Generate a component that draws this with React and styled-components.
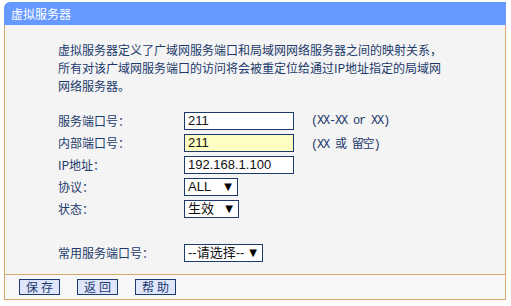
import React from "react";
import styled, { createGlobalStyle } from "styled-components";

const Global = createGlobalStyle`
  html, body { margin: 0; padding: 0; background: #ffffff; }
  body { font-family: "Noto Sans CJK SC", "Liberation Sans", sans-serif; }
`;

const NAVY = "#1c3a6c";
const TAN = "#d7a86c";
const CJK = `"Noto Sans CJK SC", sans-serif`;

const Page = styled.div`
  padding: 2px 0 0 4px;
  width: 502px;
`;

const Header = styled.div`
  height: 23px;
  background: #6699ff;
  border-top-left-radius: 6px;
  color: #ffffff;
  font-family: ${CJK};
  font-size: 12px;
  line-height: 23px;
  padding-left: 7px;
`;

const Body = styled.div`
  background: #f4f4f4;
  border-left: 1px solid ${TAN};
  border-right: 1px solid ${TAN};
  padding: 16px 0 10px 53px;
  color: ${NAVY};
  font-family: ${CJK};
  font-size: 12px;
`;

const Desc = styled.p`
  margin: 0;
  line-height: 18px;
  white-space: nowrap;
`;

const Form = styled.div`
  margin-top: 15px;
  display: grid;
  grid-template-columns: 126px 127px auto;
  grid-auto-rows: 22px;
  align-items: center;
`;

const Label = styled.div`
  line-height: 22px;
`;

const Cell = styled.div`
  display: flex;
  align-items: center;
`;

const Input = styled.div`
  box-sizing: border-box;
  width: 110px;
  height: 18px;
  border: 1px solid ${NAVY};
  background: ${(p) => (p.$highlight ? "#ffffc4" : "#ffffff")};
  color: #111;
  font-family: "Liberation Sans", Arial, sans-serif;
  font-size: 13px;
  line-height: 16px;
  padding-left: 3px;
`;

const Select = styled.div`
  box-sizing: border-box;
  width: ${(p) => p.$w}px;
  height: 18px;
  border: 1px solid ${NAVY};
  background: #ffffff;
  color: #111;
  font-family: "Liberation Sans", ${CJK};
  font-size: 13px;
  line-height: 16px;
  padding: 0 5px 0 3px;
  display: flex;
  justify-content: space-between;
  align-items: center;
`;

const Arrow = styled.span`
  font-family: "DejaVu Sans", sans-serif;
  font-size: 10px;
  color: #000;
`;

const Hint = styled.div`
  font-family: "Liberation Mono", ${CJK}, monospace;
  font-size: 12px;
  letter-spacing: -1.2px;
  color: ${NAVY};
`;

const Footer = styled.div`
  box-sizing: border-box;
  height: 26px;
  border: 1px solid ${TAN};
  background: #f7f7f7;
  display: flex;
  align-items: center;
  gap: 17px;
  padding-left: 14px;
`;

const Button = styled.button`
  box-sizing: border-box;
  width: 41px;
  height: 16px;
  margin: 0;
  padding: 0;
  border: 1px solid ${NAVY};
  background: #dfe5fb;
  color: ${NAVY};
  font-family: ${CJK};
  font-size: 12px;
  line-height: 14px;
  letter-spacing: 3px;
  text-indent: 3px;
`;

export default function App() {
  return (
    <Page>
      <Global />
      <Header>虚拟服务器</Header>
      <Body>
        <Desc>
          虚拟服务器定义了广域网服务端口和局域网网络服务器之间的映射关系，
          <br />
          所有对该广域网服务端口的访问将会被重定位给通过IP地址指定的局域网
          <br />
          网络服务器。
        </Desc>
        <Form>
          <Label>服务端口号：</Label>
          <Cell><Input>211</Input></Cell>
          <Hint>(XX-XX or XX)</Hint>

          <Label>内部端口号：</Label>
          <Cell><Input $highlight>211</Input></Cell>
          <Hint>(XX 或 留空)</Hint>

          <Label>IP地址：</Label>
          <Cell><Input>192.168.1.100</Input></Cell>
          <div />

          <Label>协议：</Label>
          <Cell><Select $w={54}>ALL<Arrow>▼</Arrow></Select></Cell>
          <div />

          <Label>状态：</Label>
          <Cell><Select $w={55}>生效<Arrow>▼</Arrow></Select></Cell>
          <div />

          <div />
          <div />
          <div />

          <Label>常用服务端口号：</Label>
          <Cell><Select $w={79}>--请选择--<Arrow>▼</Arrow></Select></Cell>
          <div />
        </Form>
      </Body>
      <Footer>
        <Button>保存</Button>
        <Button>返回</Button>
        <Button>帮助</Button>
      </Footer>
    </Page>
  );
}
